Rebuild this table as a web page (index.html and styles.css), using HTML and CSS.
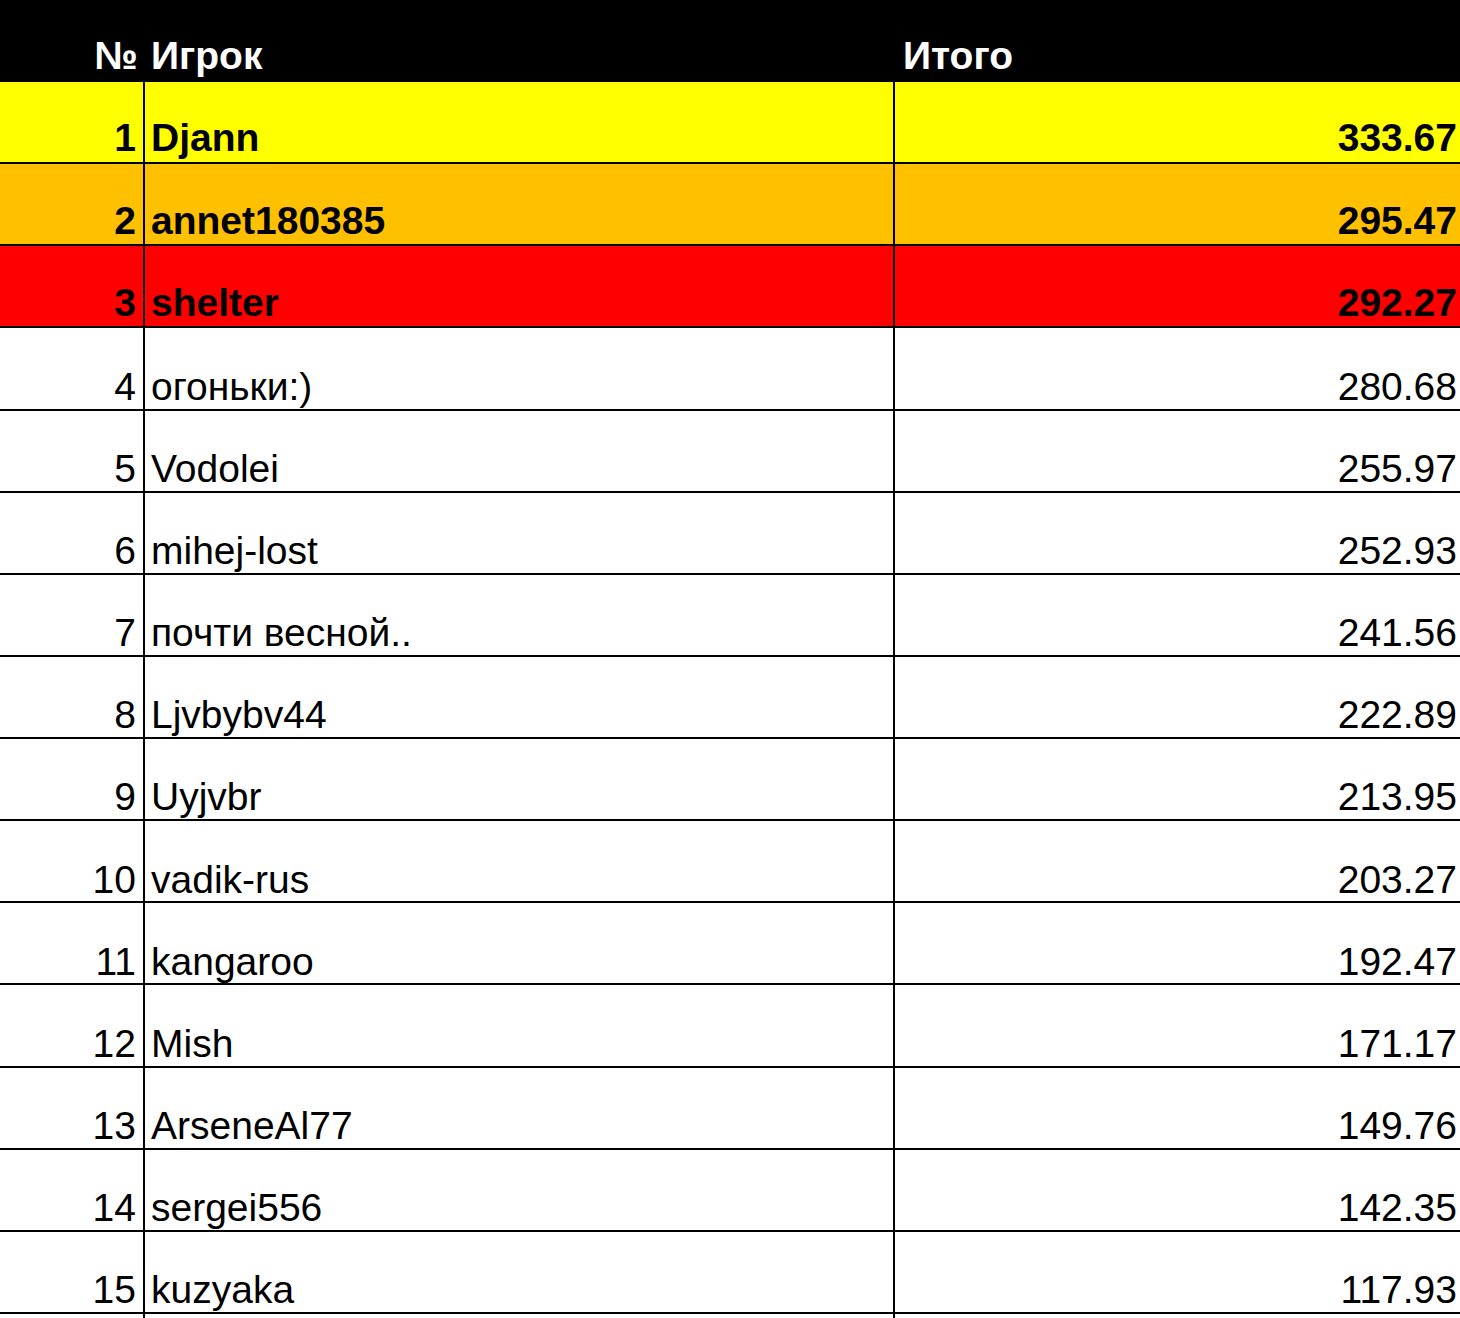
FILE: index.html
```html
<!DOCTYPE html>
<html lang="ru">
<head>
<meta charset="utf-8">
<title>Итоги</title>
<link rel="stylesheet" href="styles.css">
</head>
<body>
<div class="sheet">
  <div class="head">
    <div class="c num">№</div>
    <div class="c name">Игрок</div>
    <div class="c total">Итого</div>
  </div>
  <div class="row gold"><div class="c num">1</div><div class="c name">Djann</div><div class="c total">333.67</div></div>
  <div class="row silver"><div class="c num">2</div><div class="c name">annet180385</div><div class="c total">295.47</div></div>
  <div class="row bronze"><div class="c num">3</div><div class="c name">shelter</div><div class="c total">292.27</div></div>
  <div class="row"><div class="c num">4</div><div class="c name">огоньки:)</div><div class="c total">280.68</div></div>
  <div class="row"><div class="c num">5</div><div class="c name">Vodolei</div><div class="c total">255.97</div></div>
  <div class="row"><div class="c num">6</div><div class="c name">mihej-lost</div><div class="c total">252.93</div></div>
  <div class="row"><div class="c num">7</div><div class="c name">почти весной..</div><div class="c total">241.56</div></div>
  <div class="row"><div class="c num">8</div><div class="c name">Ljvbybv44</div><div class="c total">222.89</div></div>
  <div class="row"><div class="c num">9</div><div class="c name">Uyjvbr</div><div class="c total">213.95</div></div>
  <div class="row"><div class="c num">10</div><div class="c name">vadik-rus</div><div class="c total">203.27</div></div>
  <div class="row"><div class="c num">11</div><div class="c name">kangaroo</div><div class="c total">192.47</div></div>
  <div class="row"><div class="c num">12</div><div class="c name">Mish</div><div class="c total">171.17</div></div>
  <div class="row"><div class="c num">13</div><div class="c name">ArseneAl77</div><div class="c total">149.76</div></div>
  <div class="row"><div class="c num">14</div><div class="c name">sergei556</div><div class="c total">142.35</div></div>
  <div class="row"><div class="c num">15</div><div class="c name">kuzyaka</div><div class="c total">117.93</div></div>
  <div class="row tail"><div class="c num"></div><div class="c name"></div><div class="c total"></div></div>
</div>
</body>
</html>
```
FILE: styles.css
```css
html, body {
  margin: 0;
  padding: 0;
  background: #fff;
}
body {
  width: 1460px;
  height: 1318px;
  overflow: hidden;
  font-family: "Liberation Sans", Arial, sans-serif;
  font-size: 39px;
  color: #000;
}
.sheet {
  display: flex;
  flex-direction: column;
}
.head, .row {
  display: grid;
  grid-template-columns: 145px 750px 1fr;
  box-sizing: border-box;
}
.head {
  height: 82px;
  background: #000;
  color: #fff;
  font-weight: bold;
}
.head .c {
  padding-bottom: 4px;
}
.row {
  height: 82.13px;
  border-bottom: 2px solid #000;
}
.row .c {
  border-right: 2px solid #000;
  padding-bottom: 0;
}
.row .c.total {
  border-right: none;
}
.c {
  display: flex;
  align-items: flex-end;
  box-sizing: border-box;
  white-space: nowrap;
  line-height: 1.12;
}
.num {
  justify-content: flex-end;
  padding-right: 7px;
}
.name {
  padding-left: 6px;
}
.total {
  justify-content: flex-end;
  padding-right: 3px;
}
.head .total {
  justify-content: flex-start;
  padding-left: 8px;
}
.gold, .silver, .bronze {
  font-weight: bold;
}
.gold .c, .silver .c, .bronze .c {
  padding-bottom: 2px;
}
.gold { background: #ffff00; }
.silver { background: #ffc000; }
.bronze { background: #ff0000; }
.row.tail {
  height: 8px;
  border-bottom: none;
}
```
